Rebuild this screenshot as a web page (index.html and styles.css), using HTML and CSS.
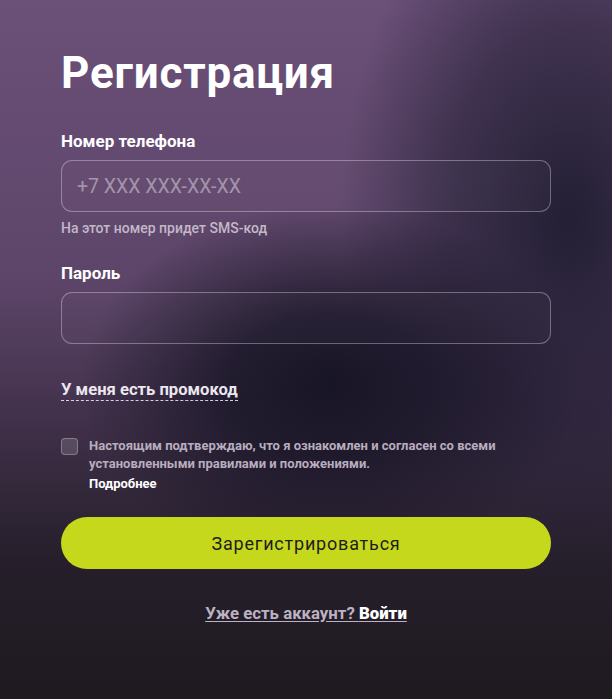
FILE: index.html
```html
<!DOCTYPE html>
<html lang="ru">
<head>
<meta charset="utf-8">
<title>Регистрация</title>
<link rel="stylesheet" href="styles.css">
</head>
<body>
<main class="page">
  <form class="form">
    <h1 class="title">Регистрация</h1>

    <div class="field">
      <label class="label" for="phone">Номер телефона</label>
      <input class="input" id="phone" type="tel" placeholder="+7 XXX XXX-XX-XX">
      <div class="hint">На этот номер придет SMS-код</div>
    </div>

    <div class="field field-pass">
      <label class="label" for="pass">Пароль</label>
      <input class="input" id="pass" type="password">
    </div>

    <a class="promo" href="#">У меня есть промокод</a>

    <div class="agree">
      <span class="checkbox"></span>
      <div class="agree-text">
        <p class="agree-main">Настоящим подтверждаю, что я ознакомлен и согласен со всеми установленными правилами и положениями.</p>
        <a class="agree-more" href="#">Подробнее</a>
      </div>
    </div>

    <button class="submit" type="button">Зарегистрироваться</button>

    <div class="login">
      <a href="#" class="login-link">Уже есть аккаунт? <b>Войти</b></a>
    </div>
  </form>
</main>
</body>
</html>
```

FILE: styles.css
```css
* { box-sizing: border-box; }
html, body { margin: 0; height: 100%; }
body {
  font-family: Roboto, "Liberation Sans", sans-serif;
  color: #fff;
  background:
    radial-gradient(ellipse 250px 180px at 330px 385px, rgba(24,21,38,1) 0%, rgba(24,21,38,0.8) 40%, rgba(24,21,38,0) 100%),
    radial-gradient(ellipse 230px 360px at 570px 220px, rgba(32,29,50,0.95) 0%, rgba(32,29,50,0.55) 55%, rgba(32,29,50,0) 100%),
    linear-gradient(180deg, #6b5078 0%, #5d4569 40%, #3e2f47 62%, #261f2b 80%, #1e1a20 100%);
  min-height: 699px;
}
.page { padding: 44px 61px 0; }
.form { display: flex; flex-direction: column; width: 490px; }
.title {
  margin: 0;
  font-size: 44px;
  font-weight: 700;
  line-height: 58px;
  letter-spacing: 0.8px;
}
.field { display: flex; flex-direction: column; margin-top: 29px; }
.field-pass { margin-top: 27px; }
.label { font-size: 17px; font-weight: 700; line-height: 20px; margin-bottom: 9px; }
.input {
  height: 52px;
  width: 100%;
  border-radius: 11px;
  border: 1px solid rgba(255,255,255,0.32);
  background: rgba(255,255,255,0.02);
  color: #fff;
  font-family: inherit;
  font-size: 19.5px;
  padding: 0 15px;
  outline: none;
}
.input::placeholder { color: rgba(255,255,255,0.42); }
.hint { font-size: 14px; font-weight: 500; color: #c3b8c8; margin-top: 8px; line-height: 16px; }
.promo {
  align-self: flex-start;
  margin-top: 36px;
  font-size: 16.6px;
  font-weight: 700;
  color: #ece6ef;
  text-decoration: none;
  line-height: 20px;
  border-bottom: 1px dashed rgba(255,255,255,0.8);
}
.agree { display: flex; gap: 11px; margin-top: 36px; }
.checkbox {
  flex: none;
  width: 17px; height: 17px;
  margin-top: 1px;
  border-radius: 4px;
  border: 1px solid rgba(255,255,255,0.28);
  background: rgba(255,255,255,0.14);
}
.agree-text { display: flex; flex-direction: column; }
.agree-main { margin: 0; font-size: 13px; font-weight: 700; line-height: 18px; color: #b8adbf; max-width: 430px; }
.agree-more { margin-top: 3px; font-size: 13px; font-weight: 700; color: #fff; text-decoration: none; line-height: 16px; }
.submit {
  margin-top: 25px;
  height: 52px;
  border: 0;
  border-radius: 26px;
  background: #c5d81c;
  color: #1f1d1c;
  font-family: inherit;
  font-size: 18px;
  font-weight: 400;
  letter-spacing: 0.8px;
}
.login { display: flex; justify-content: center; margin-top: 34px; }
.login-link { font-size: 16.8px; font-weight: 700; color: #bcb2c3; text-decoration: underline; text-underline-offset: 2px; }
.login-link b { color: #fff; }
```
